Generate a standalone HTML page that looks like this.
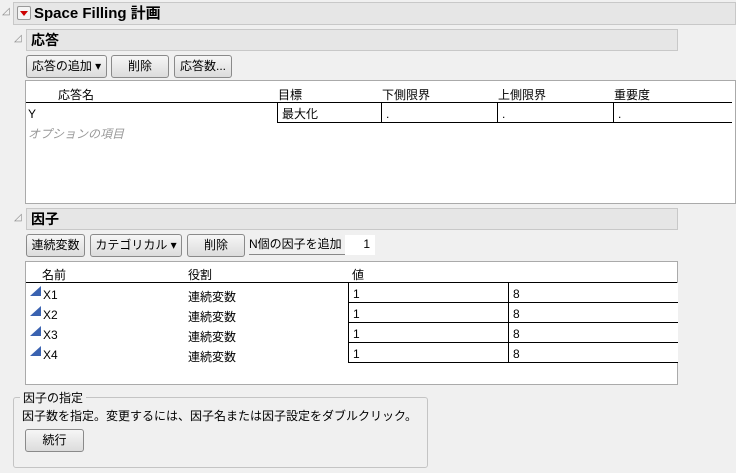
<!DOCTYPE html>
<html><head><meta charset="utf-8"><style>
*{box-sizing:border-box;margin:0;padding:0}
body{width:736px;height:473px;background:#f0f0f0;position:relative;overflow:hidden;font-family:"Liberation Sans","Noto Sans CJK JP",sans-serif;font-size:12px;color:#000}
.a{position:absolute}
.hdr{background:#e6e6e6;border:1px solid #c8c8c8;font-weight:bold;font-size:14px;padding-left:4px;line-height:20px}
.btn{position:absolute;border:1px solid #8a8a8a;border-radius:3px;background:linear-gradient(#f6f6f6,#dcdcdc);text-align:center;line-height:21px;height:23px;font-size:12px}
.tri{position:absolute;width:0;height:0;border-left:11px solid transparent;border-bottom:10px solid #3a62b0}
.cell{position:absolute;border-left:1px solid #000;border-bottom:1px solid #000;background:#fff;padding-left:4px;line-height:22px;height:20px;overflow:hidden}
</style></head><body>
<div class="a" style="left:2px;top:6px;color:#888;font-size:10px">◿</div>
<div class="a hdr" style="left:13px;top:2px;width:723px;height:23px;padding-left:20px;line-height:21px;font-size:15px">Space Filling 計画</div>
<div class="a" style="left:17px;top:6px;width:14px;height:14px;border:1px solid #999;border-radius:2px;background:#f4f4f4"><div style="margin:4px auto 0;width:0;height:0;border-left:4px solid transparent;border-right:4px solid transparent;border-top:5px solid #c00"></div></div>
<div class="a" style="left:14px;top:33px;color:#888;font-size:10px">◿</div>
<div class="a hdr" style="left:26px;top:29px;width:652px;height:22px">応答</div>
<div class="btn" style="left:26px;top:55px;width:81px">応答の追加 ▾</div>
<div class="btn" style="left:111px;top:55px;width:58px">削除</div>
<div class="btn" style="left:174px;top:55px;width:58px">応答数...</div>
<div class="a" style="left:25px;top:80px;width:711px;height:124px;background:#fff;border:1px solid #aaa"></div>
<div class="a" style="left:58px;top:86px">応答名</div>
<div class="a" style="left:278px;top:86px">目標</div>
<div class="a" style="left:382px;top:86px">下側限界</div>
<div class="a" style="left:498px;top:86px">上側限界</div>
<div class="a" style="left:614px;top:86px">重要度</div>
<div class="a" style="left:26px;top:102px;width:706px;height:1px;background:#000"></div>
<div class="a" style="left:28px;top:107px">Y</div>
<div class="cell" style="left:277px;top:103px;width:104px">最大化</div>
<div class="cell" style="left:381px;top:103px;width:116px">.</div>
<div class="cell" style="left:497px;top:103px;width:116px">.</div>
<div class="cell" style="left:613px;top:103px;width:119px">.</div>
<div class="a" style="left:28px;top:125px;color:#999;font-style:italic">オプションの項目</div>
<div class="a" style="left:14px;top:212px;color:#888;font-size:10px">◿</div>
<div class="a hdr" style="left:26px;top:208px;width:652px;height:22px">因子</div>
<div class="btn" style="left:26px;top:234px;width:59px">連続変数</div>
<div class="btn" style="left:90px;top:234px;width:92px">カテゴリカル ▾</div>
<div class="btn" style="left:187px;top:234px;width:58px">削除</div>
<div class="a" style="left:249px;top:235px;width:96px;height:20px;border-bottom:1px solid #888;line-height:18px">N個の因子を追加</div>
<div class="a" style="left:345px;top:235px;width:30px;height:20px;background:#fff;text-align:right;padding-right:5px;line-height:18px">1</div>
<div class="a" style="left:25px;top:261px;width:653px;height:124px;background:#fff;border:1px solid #aaa"></div>
<div class="a" style="left:42px;top:266px">名前</div>
<div class="a" style="left:188px;top:266px">役割</div>
<div class="a" style="left:352px;top:266px">値</div>
<div class="a" style="left:26px;top:282px;width:651px;height:1px;background:#000"></div>
<div class="tri" style="left:30px;top:286px"></div><div class="a" style="left:43px;top:288px">X1</div><div class="a" style="left:188px;top:288px">連続変数</div>
<div class="cell" style="left:348px;top:283px;width:161px">1</div><div class="cell" style="left:508px;top:283px;width:170px">8</div>
<div class="tri" style="left:30px;top:306px"></div><div class="a" style="left:43px;top:308px">X2</div><div class="a" style="left:188px;top:308px">連続変数</div>
<div class="cell" style="left:348px;top:303px;width:161px">1</div><div class="cell" style="left:508px;top:303px;width:170px">8</div>
<div class="tri" style="left:30px;top:326px"></div><div class="a" style="left:43px;top:328px">X3</div><div class="a" style="left:188px;top:328px">連続変数</div>
<div class="cell" style="left:348px;top:323px;width:161px">1</div><div class="cell" style="left:508px;top:323px;width:170px">8</div>
<div class="tri" style="left:30px;top:346px"></div><div class="a" style="left:43px;top:348px">X4</div><div class="a" style="left:188px;top:348px">連続変数</div>
<div class="cell" style="left:348px;top:343px;width:161px">1</div><div class="cell" style="left:508px;top:343px;width:170px">8</div>
<div class="a" style="left:13px;top:397px;width:415px;height:71px;border:1px solid #c4c4c4;border-radius:3px"></div>
<div class="a" style="left:20px;top:389px;background:#f0f0f0;padding:0 3px">因子の指定</div>
<div class="a" style="left:22px;top:407px">因子数を指定。変更するには、因子名または因子設定をダブルクリック。</div>
<div class="btn" style="left:25px;top:429px;width:59px">続行</div>
</body></html>
